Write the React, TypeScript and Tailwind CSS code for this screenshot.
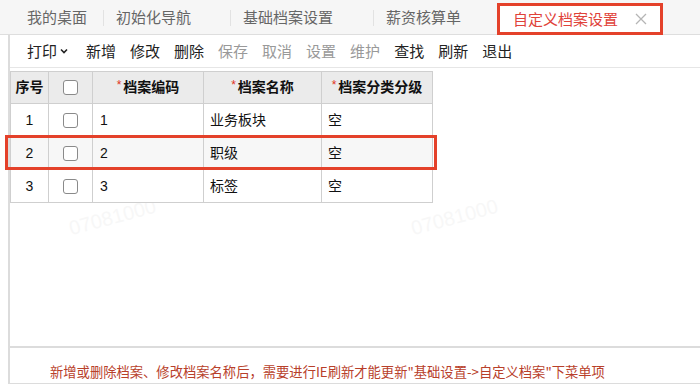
import React from "react";

const font = { fontFamily: '"Noto Sans CJK SC", "Liberation Sans", sans-serif' };

function Checkbox() {
  return <div className="w-[15px] h-[15px] rounded-[3px] border border-[#8a8a8a] bg-white" />;
}

function Star() {
  return <span className="text-[#e0321c] text-[12px] font-normal mr-[2px] relative top-[-3px]">*</span>;
}

export default function App() {
  const rows = [
    { no: "1", code: "1", name: "业务板块", lvl: "空" },
    { no: "2", code: "2", name: "职级", lvl: "空" },
    { no: "3", code: "3", name: "标签", lvl: "空" },
  ];
  return (
    <div className="w-[700px] h-[384px] overflow-hidden bg-white relative flex flex-col" style={font}>
      {/* tab bar */}
      <div className="h-[35px] shrink-0 bg-[#f6f6f6] border-b border-[#dedede] flex items-stretch text-[15px] text-[#666]">
        <div className="w-[89px] ml-[14px] pl-[13px] flex items-center">我的桌面</div>
        <div className="w-[127px] pl-[13px] flex items-center relative">
          <div className="absolute left-0 top-[10px] h-[16px] w-px bg-[#e2e2e2]" />
          初始化导航
        </div>
        <div className="w-[143px] pl-[13px] flex items-center relative">
          <div className="absolute left-0 top-[10px] h-[16px] w-px bg-[#e2e2e2]" />
          基础档案设置
        </div>
        <div className="w-[124px] pl-[13px] flex items-center relative">
          <div className="absolute left-0 top-[10px] h-[16px] w-px bg-[#e2e2e2]" />
          薪资核算单
        </div>
        <div className="w-[166px] mt-[3px] mb-[-1px] bg-white border-[3px] border-[#e4412a] pl-[13px] flex items-center text-[#e0423a]">
          自定义档案设置
          <svg width="12" height="12" viewBox="0 0 12 12" className="ml-[17px]">
            <path d="M1 1 L11 11 M11 1 L1 11" stroke="#b5b5b5" strokeWidth="1.3" />
          </svg>
        </div>
      </div>

      {/* main */}
      <div className="flex-1 ml-[8px] border-l-2 border-[#dcdcdc] flex flex-col min-h-0">
        {/* toolbar */}
        <div className="h-[33px] shrink-0 border-b border-[#e6e6e6] flex items-center pl-[17px] gap-[14px] text-[15px] text-[#222]">
          <div className="flex items-center mr-[3px]">
            打印
            <svg width="10" height="10" viewBox="0 0 10 10" className="ml-[2px]">
              <path d="M2 3.5 L5 6.5 L8 3.5" stroke="#222" strokeWidth="1.6" fill="none" />
            </svg>
          </div>
          <span>新增</span>
          <span>修改</span>
          <span>删除</span>
          <span className="text-[#999]">保存</span>
          <span className="text-[#999]">取消</span>
          <span className="text-[#999]">设置</span>
          <span className="text-[#999]">维护</span>
          <span>查找</span>
          <span>刷新</span>
          <span>退出</span>
        </div>

        {/* table area */}
        <div className="flex-1 relative border-b-2 border-[#dcdcdc] pt-[3px]">
          {/* watermarks */}
          <div className="absolute left-[58px] top-[138px] -rotate-[15deg] text-[#f7f7f7] text-[20px] leading-[22px]" style={{ fontFamily: '"Liberation Sans", sans-serif' }}>
            07081000
          </div>
          <div className="absolute left-[400px] top-[138px] -rotate-[15deg] text-[#f7f7f7] text-[20px] leading-[22px]" style={{ fontFamily: '"Liberation Sans", sans-serif' }}>
            07081000
          </div>

          <table className="border-collapse text-[14px] text-[#111] relative" style={{ fontFamily: '"Liberation Sans", "Noto Sans CJK SC", sans-serif' }}>
            <thead>
              <tr className="h-[32px] bg-[#ebebeb] font-bold">
                <th className="w-[38px] border border-[#cfcfcf] text-center p-0">序号</th>
                <th className="w-[44px] border border-[#cfcfcf] p-0">
                  <div className="flex justify-center"><Checkbox /></div>
                </th>
                <th className="w-[111px] border border-[#cfcfcf] text-center p-0"><Star />档案编码</th>
                <th className="w-[118px] border border-[#cfcfcf] text-center p-0"><Star />档案名称</th>
                <th className="w-[111px] border border-[#cfcfcf] text-center p-0"><Star />档案分类分级</th>
              </tr>
            </thead>
            <tbody>
              {rows.map((r, i) => (
                <tr key={r.no} className={"h-[33px] " + (i === 1 ? "bg-[#f7f7f7]" : "bg-white")}>
                  <td className="border border-[#cfcfcf] text-center p-0">{r.no}</td>
                  <td className="border border-[#cfcfcf] p-0">
                    <div className="flex justify-center"><Checkbox /></div>
                  </td>
                  <td className="border border-[#cfcfcf] pl-[7px] py-0">{r.code}</td>
                  <td className="border border-[#cfcfcf] pl-[6px] py-0">{r.name}</td>
                  <td className="border border-[#cfcfcf] pl-[6px] py-0">{r.lvl}</td>
                </tr>
              ))}
            </tbody>
          </table>

          {/* red annotation around row 2 */}
          <div className="absolute left-[-5px] top-[67px] w-[432px] h-[35px] border-[3px] border-[#e4412a]" />
        </div>

        {/* footer note */}
        <div className="h-[36px] shrink-0 border-b border-[#dcdcdc] flex items-end pl-[40px] pb-[1px] text-[13.3px] text-[#b8402a]">
          新增或删除档案、修改档案名称后，需要进行IE刷新才能更新"基础设置-&gt;自定义档案"下菜单项
        </div>
      </div>
    </div>
  );
}
